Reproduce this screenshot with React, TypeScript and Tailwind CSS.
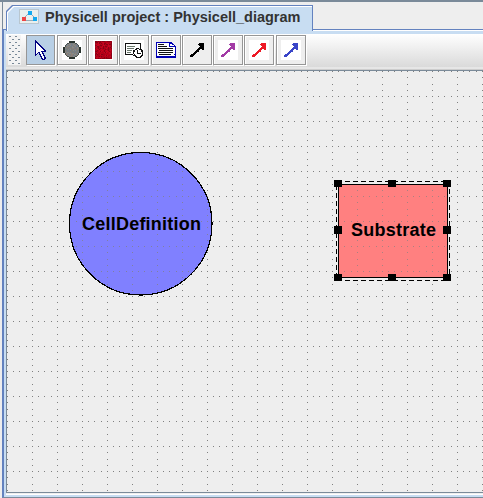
import React from 'react';

type Bitmap = { rows: string[]; colors: Record<string, string> };

const xs = [0, 6, 12, 19];
const ys = [0, 6, 13, 19];

function PixelArt({ rows, colors }: Bitmap) {
  return (
    <svg width={rows[0].length} height={rows.length} shapeRendering="crispEdges" className="block shrink-0">
      {rows.flatMap((row, y) =>
        row.split('').map((c, x) =>
          colors[c] ? <rect key={`${x}-${y}`} x={x} y={y} width="1" height="1" fill={colors[c]} /> : null,
        ),
      )}
    </svg>
  );
}

const cursor = [
  '#...........',
  '##..........',
  '###.........',
  '#o##........',
  '#oo##.......',
  '#ooo##......',
  '#oooo##.....',
  '#ooooo##....',
  '#oooooo##...',
  '#ooooooo##..',
  '#oooooooo##.',
  '#ooooo#####.',
  '#oo##oo#....',
  '#o#.#oo##...',
  '##..##oo#...',
  '#....#oo##..',
  '.....##oo#..',
  '......#oo##.',
  '......##o##.',
  '.......###..',
];

const arrow = [
  '.........#####.',
  '........######.',
  '.........#####.',
  '..........####.',
  '.........#####.',
  '........######.',
  '.......###..##.',
  '......###......',
  '.....####......',
  '....###........',
  '...###.........',
  '.####..........',
  '####...........',
  '###............',
];

const clockNote = [
  '################..',
  '#..............#..',
  '#..............#..',
  '#.gggggggg.....#..',
  '#..............#..',
  '#.ggggggg..###.#..',
  '#.........##..###.',
  '#.ggggg.##..#...##',
  '#.......##..#...##',
  '#.gggg..#...#....#',
  '#.......#...####.#',
  '########.#.......#',
  '........###.....##',
  '..........##...##.',
  '...........#####..',
];

const doc = [
  'bbbbbbbbbbbbbbbb....',
  'boooooooooooobbbb...',
  'bo######oooooboobb..',
  'booooooooooooboooob.',
  'bo#########oobbbbbbb',
  'boooooooooooooooooob',
  'bo###############oob',
  'boooooooooooooooooob',
  'boo##############oob',
  'boooooooooooooooooob',
  'bo###############oob',
  'boooooooooooooooooob',
  'boo############ooobb',
  'boooooooooooooooooob',
  'bbbbbbbbbbbbbbbbbbbb',
  'bbbbbbbbbbbbbbbbbbbb',
];

function speckle(w: number, h: number, pick: (x: number, y: number, n: number) => string) {
  return Array.from({ length: h }, (_, y) =>
    Array.from({ length: w }, (_, x) => pick(x, y, (x * 37 + y * 53 + x * y * 17 + ((x * x + y * 3) % 11) * 7) % 5)).join(''),
  );
}

const disc = speckle(18, 18, (x, y, n) => {
  const dx = Math.abs(x - 8.5);
  const dy = Math.abs(y - 8.5);
  const d = Math.hypot(dx, dy);
  if ((dx < 3 && dy > 7) || (dy < 3 && dx > 7)) return 'k';
  if (d > 7.2 && d < 8.2) return 'e';
  return d <= 7.2 ? 'abcad'[n] : '.';
});
const redBox = speckle(17, 18, (x, y, n) => (x === 0 || y === 0 || x === 16 || y === 17 ? 'aabba'[n] : 'abcdd'[n]));

function ToolButton({ children, wide, plate, active }: { children: React.ReactNode; wide?: boolean; plate?: boolean; active?: boolean }) {
  return (
    <div className={`h-[31px] shrink-0 ${wide ? 'w-8' : 'w-[31px]'}`}>
      <button
        className={`flex h-[30px] items-center justify-center border border-[#969696] ${active ? 'w-[29px]' : 'w-[30px]'} ${
          active ? 'bg-[#b8cfe5] shadow-[1px_1px_0_#fff]' : 'bg-[#eeeeee] shadow-[1px_1px_0_#fff,inset_1px_1px_0_#fff]'
        }`}
      >
        <span className={`flex h-5 w-5 items-center justify-center ${plate ? 'bg-white' : ''}`}>{children}</span>
      </button>
    </div>
  );
}

function Tab() {
  return (
    <div className="ml-1 h-[26px] w-[307px] bg-[#6382bf] pt-px pr-px pl-px [clip-path:polygon(6px_0,100%_0,100%_100%,0_100%,0_6px)]">
      <div className="h-full bg-white pt-px pl-px [clip-path:polygon(6px_0,100%_0,100%_100%,0_100%,0_6px)]">
        <div className="flex h-full items-start bg-[#c8ddf2] pl-[11px] [clip-path:polygon(6px_0,100%_0,100%_100%,0_100%,0_6px)]">
          <svg width="20" height="15" className="mt-[2px] shrink-0" shapeRendering="crispEdges">
            <rect x=".5" y=".5" width="19" height="14" fill="#e9efee" stroke="#b9c6cf" />
            <path d="M5 9L10 4M12 5L16 9M6 11H15" stroke="#9aa9b4" />
            <rect x="9" y="2" width="4" height="4" fill="#12a8ef" />
            <rect x="14" y="8" width="4" height="4" fill="#12a8ef" />
            <rect x="3" y="8" width="4" height="4" fill="#f04444" />
          </svg>
          <span className="ml-[6px] text-[14.5px] leading-[20px] font-bold whitespace-nowrap text-[#333333]">
            Physicell project : Physicell_diagram
          </span>
        </div>
      </div>
    </div>
  );
}

function Grid() {
  return (
    <defs>
      <pattern id="dots" x="0" y="0" width="25" height="25" patternUnits="userSpaceOnUse">
        {xs.map((x) => (
          <rect key={`h${x}`} x={x} y="0" width="1" height="1" fill="#808080" />
        ))}
        {ys.slice(1).map((y) => (
          <rect key={`v${y}`} x="0" y={y} width="1" height="1" fill="#808080" />
        ))}
      </pattern>
    </defs>
  );
}

function Diagram() {
  return (
    <svg width="476" height="421" className="block" shapeRendering="crispEdges">
      <Grid />
      <rect width="476" height="421" fill="#eeeeee" />
      <rect width="476" height="421" fill="url(#dots)" />
      <circle cx="133.75" cy="152.75" r="71.25" fill="#8080ff" stroke="#000" strokeWidth="1.2" />
      <rect x="331.5" y="113.5" width="109" height="93" fill="#ff8080" stroke="#000" />
      <circle cx="134" cy="153" r="70" fill="url(#dots)" opacity=".75" />
      <rect x="332" y="114" width="108" height="92" fill="url(#dots)" opacity=".65" />
      <rect x="329.5" y="110.5" width="113" height="99" fill="none" stroke="#000" strokeDasharray="5 3" />
      {[327, 381, 436].flatMap((x, i) =>
        [109, 155, 203].map((y, j) =>
          i === 1 && j === 1 ? null : <rect key={`${x}-${y}`} x={x} y={y} width="8" height={j === 1 ? 8 : 7} fill="#000" />,
        ),
      )}
      <g fontSize="18" fontWeight="700" fill="#000">
        <text x="75" y="159" textLength="119" lengthAdjust="spacing">CellDefinition</text>
        <text x="344" y="165" textLength="85" lengthAdjust="spacing">Substrate</text>
      </g>
    </svg>
  );
}

export default function App() {
  return (
    <div className="flex h-[498px] w-[483px] flex-col overflow-hidden border-t-2 border-[#7a8a99] bg-[#eeeeee] font-['Liberation_Sans',Arial,sans-serif]">
      <div className="flex min-h-0 flex-1">
        <div className="w-[2px] shrink-0 bg-[#eeeeee]" />
        <div className="flex min-w-0 flex-1 flex-col">
          <div className="h-[27px] shrink-0 border-l border-[#7a8a99] bg-[#eeeeee] pt-[3px]">
            <div className="-ml-px">
              <Tab />
            </div>
          </div>
          <div className="flex h-[5px] shrink-0">
            <div className="h-full w-1 border-t border-l-2 border-[#6382bf] bg-[#c8ddf2]" />
            <div className="h-full w-[307px] bg-[#c8ddf2]" />
            <div className="h-full flex-1 border-t border-[#6382bf] bg-[#c8ddf2]">
              <div className="h-px bg-white" />
            </div>
          </div>
          <div className="flex min-h-0 flex-1 flex-col border-b border-l-2 border-b-[#7a8a99] border-l-[#6382bf] bg-[#c8ddf2] pb-[2px] pl-[2px]">
            <div className="flex h-[33px] shrink-0 bg-linear-to-b from-white to-[#dadada] pt-px">
              <svg width="20" height="31" className="shrink-0" shapeRendering="crispEdges">
                <defs>
                  <pattern id="grip" x="2" y="1" width="6" height="6" patternUnits="userSpaceOnUse">
                    <rect width="6" height="6" fill="#f3f3f3" />
                    <rect x="1" y="0" width="2" height="1" fill="#7a8a99" />
                    <rect x="4" y="3" width="2" height="1" fill="#7a8a99" />
                  </pattern>
                </defs>
                <rect x="2" y="0" width="13" height="30" fill="url(#grip)" />
              </svg>
              <ToolButton active>
                <PixelArt rows={cursor} colors={{ '#': '#000080', o: '#ffffff' }} />
              </ToolButton>
              <ToolButton plate>
                <PixelArt rows={disc} colors={{ k: '#29332e', e: '#4c534f', a: '#7c7f7d', b: '#8c807a', c: '#747e8b', d: '#888b88' }} />
              </ToolButton>
              <ToolButton plate>
                <PixelArt rows={redBox} colors={{ a: '#850315', b: '#aa0019', c: '#c80520', d: '#b80018' }} />
              </ToolButton>
              <ToolButton plate wide>
                <PixelArt rows={clockNote} colors={{ '#': '#111111', g: '#68766a' }} />
              </ToolButton>
              <ToolButton>
                <PixelArt rows={doc} colors={{ b: '#0000b4', '#': '#111111', o: '#ffffff' }} />
              </ToolButton>
              <ToolButton>
                <PixelArt rows={arrow} colors={{ '#': '#000000' }} />
              </ToolButton>
              <ToolButton plate>
                <PixelArt rows={arrow} colors={{ '#': '#a23aa5' }} />
              </ToolButton>
              <ToolButton plate wide>
                <PixelArt rows={arrow} colors={{ '#': '#ed1925' }} />
              </ToolButton>
              <ToolButton plate>
                <PixelArt rows={arrow} colors={{ '#': '#3a45c8' }} />
              </ToolButton>
            </div>
            <div className="h-[3px] shrink-0 border-b border-[#cccccc] bg-[#e6e6e6]" />
            <div className="shrink-0 border-y border-l border-[#7a8a99]">
              <Diagram />
            </div>
            <div className="h-px shrink-0 bg-[#eeeeee]" />
            <div className="h-px shrink-0 bg-white" />
          </div>
        </div>
      </div>
    </div>
  );
}
